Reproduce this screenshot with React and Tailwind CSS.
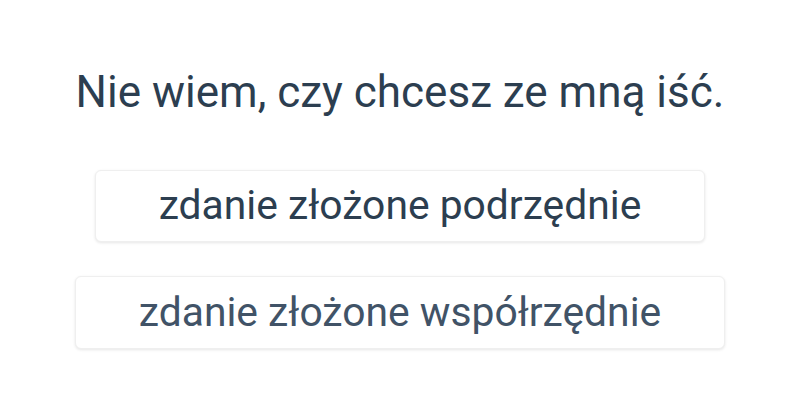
export default function App() {
  return (
    <div className="w-[800px] h-[400px] bg-white flex flex-col items-center font-['Roboto',sans-serif]">
      <h1 className="mt-[64px] text-[44px] leading-[56px] text-[#2c3e50] font-normal">Nie wiem, czy chcesz ze mną iść.</h1>
      <button className="mt-[50px] h-[72px] px-[63px] rounded-[6px] bg-white border border-[#efefef] shadow-[0_1px_3px_rgba(0,0,0,0.10)] text-[40.8px] text-[#2c3e50]">zdanie złożone podrzędnie</button>
      <button className="mt-[34px] h-[73px] px-[63px] rounded-[6px] bg-white border border-[#efefef] shadow-[0_1px_3px_rgba(0,0,0,0.10)] text-[40.8px] text-[#415367]">zdanie złożone współrzędnie</button>
    </div>
  );
}
